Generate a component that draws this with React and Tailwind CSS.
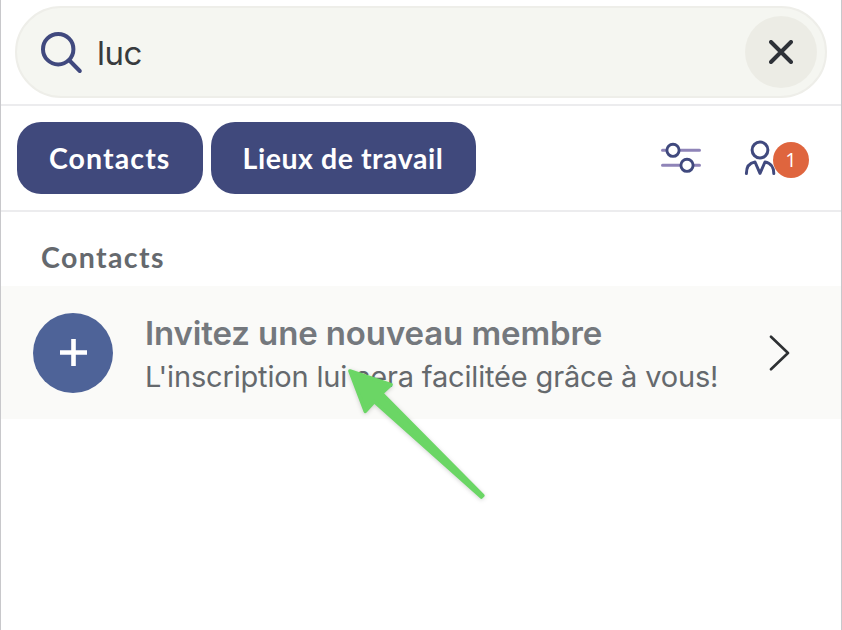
function SearchIcon() {
  return (
    <svg className="mt-[2px] h-[44px] w-[44px] shrink-0" viewBox="0 0 44 44" fill="none" stroke="#40497e" strokeWidth="4" strokeLinecap="round">
      <circle cx="18.2" cy="18.2" r="15.2" />
      <path d="M29.5 29.5L39.8 40" />
    </svg>
  );
}

function CloseIcon() {
  return (
    <svg className="h-6 w-6" viewBox="0 0 24 24" fill="none" stroke="#2e3238" strokeWidth="4" strokeLinecap="round">
      <path d="M2 2L22 22M22 2L2 22" />
    </svg>
  );
}

function FilterIcon() {
  return (
    <svg className="h-[32px] w-[40px] shrink-0" viewBox="0 0 40 32" fill="none" strokeLinecap="round">
      <path d="M1.5 8.3H38.5M1.5 23.3H38.5" stroke="#8f84b8" strokeWidth="3" />
      <circle cx="12" cy="8.3" r="6.1" fill="#fff" stroke="#40497e" strokeWidth="2.9" />
      <circle cx="26" cy="23.3" r="6.1" fill="#fff" stroke="#40497e" strokeWidth="2.9" />
    </svg>
  );
}

function PersonIcon() {
  return (
    <svg className="h-[36px] w-[32px] shrink-0" viewBox="0 0 32 36" fill="none" stroke="#40497e" strokeWidth="3" strokeLinecap="round" strokeLinejoin="round">
      <circle cx="16" cy="10" r="7.9" />
      <path d="M2.4 33.5C2.4 27.3 5.5 22.9 11 22L16 33.3L21 22C26.5 22.9 29.8 27.3 29.8 33.5" />
    </svg>
  );
}

function Arrow() {
  return (
    <svg className="pointer-events-none absolute top-[360px] left-[339px] h-[145px] w-[155px] drop-shadow-[0_1px_2px_rgba(0,0,0,0.18)]" viewBox="340 360 155 145">
      <path
        d="M350 371L391 384.7L381.5 393.3L482.8 495.5L481.3 497L374.2 401.5L365.3 411.3Z"
        fill="#6bd665"
        stroke="#6bd665"
        strokeWidth="3.6"
        strokeLinejoin="round"
      />
    </svg>
  );
}

function Chip({ children, className }) {
  return (
    <button className={`h-[72px] rounded-[24px] bg-[#40497c] text-center font-['Lato',sans-serif] text-[28.5px] font-bold whitespace-nowrap text-white ${className}`}>
      {children}
    </button>
  );
}

export default function App() {
  return (
    <main className="relative h-[630px] w-[842px] overflow-hidden border-x border-[#c8c8cb] bg-white font-['Inter',sans-serif]">
      <header className="h-[106px] border-b-2 border-[#ececee] px-[14px] pt-[6px]">
        <div className="flex h-[92px] items-center rounded-full border-2 border-[#eeeee9] bg-[#f5f6f1] pr-[8px] pl-[23px]">
          <SearchIcon />
          <span className="mt-[2px] ml-[13px] flex-1 text-[33px] leading-10 tracking-[-0.5px] text-[#383b3e]">luc</span>
          <button className="flex h-[72px] w-[72px] items-center justify-center rounded-full bg-[#ecece5]">
            <CloseIcon />
          </button>
        </div>
      </header>

      <nav className="flex h-[106px] items-center border-b-2 border-[#ececee] pl-4">
        <Chip className="w-[185.5px] tracking-[1.1px]">Contacts</Chip>
        <Chip className="ml-[8px] w-[265px] tracking-[0.55px]">Lieux de travail</Chip>
        <div className="ml-auto flex items-center pr-[32px]">
          <FilterIcon />
          <div className="ml-[43px] flex items-center">
            <PersonIcon />
            <span className="z-10 mt-[3px] -ml-[3px] flex h-9 w-9 items-center justify-center rounded-full bg-[#df653e] pt-px font-['Open_Sans',sans-serif] text-[20px] leading-none text-white">1</span>
          </div>
        </div>
      </nav>

      <section>
        <h2 className="h-[74px] pt-[25px] pl-10 font-['Lato',sans-serif] text-[28.5px] leading-10 font-bold tracking-[1.4px] text-[#65696e]">Contacts</h2>
        <div className="flex h-[133px] items-center bg-[#fafaf8] pr-[51px] pl-8">
          <div className="flex h-20 w-20 items-center justify-center rounded-full bg-[#4e6398]">
            <svg className="h-[27px] w-[27px]" viewBox="0 0 27 27" stroke="#fff" strokeWidth="4.6">
              <path d="M0 13.5H27M13.5 0V27" />
            </svg>
          </div>
          <div className="mt-[6px] ml-8 flex-1 whitespace-nowrap">
            <p className="text-[33px] leading-[43px] font-semibold tracking-[-0.12px] text-[#74787d]">Invitez une nouveau membre</p>
            <p className="text-[29px] leading-[44px] tracking-[-0.17px] text-[#65696d]">L'inscription lui sera facilitée grâce à vous!</p>
          </div>
          <svg className="h-[36px] w-[21px] shrink-0" viewBox="0 0 21 36" fill="none" stroke="#2d3033" strokeWidth="2.6" strokeLinecap="round" strokeLinejoin="round">
            <path d="M2 1.7L19 18L2 34.3" />
          </svg>
        </div>
      </section>
      <Arrow />
    </main>
  );
}
